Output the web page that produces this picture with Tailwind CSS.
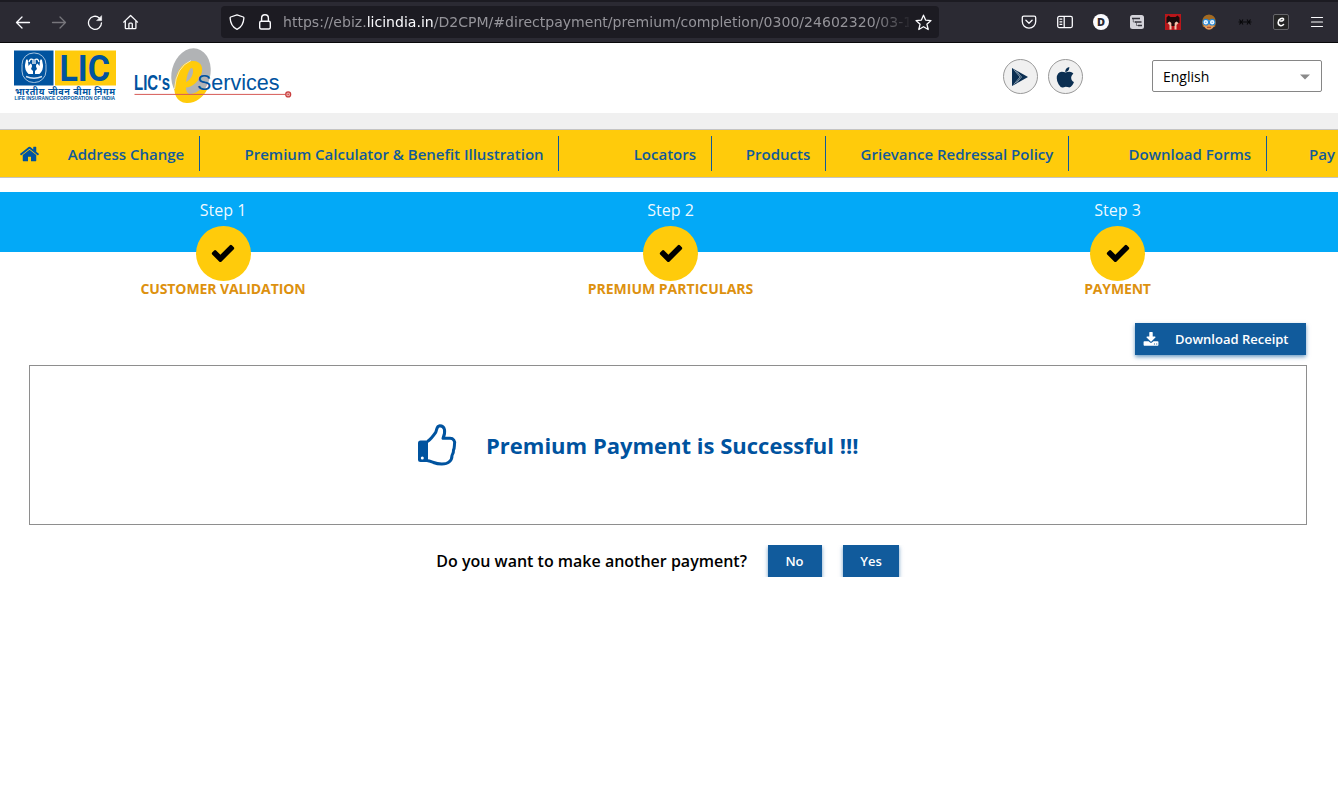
<!DOCTYPE html>
<html lang="en">
<head>
<meta charset="utf-8">
<title>LIC e-Services</title>
<script src="https://cdn.jsdelivr.net/npm/@tailwindcss/browser@4"></script>
</head>
<body class="h-[795px] w-[1338px] overflow-hidden bg-white font-['Open_Sans',sans-serif]">
<svg class="hidden">
  <symbol id="check" viewBox="0 0 1792 1792"><path d="M1671 566q0 40-28 68l-724 724-136 136q-28 28-68 28t-68-28l-136-136-362-362q-28-28-28-68t28-68l136-136q28-28 68-28t68 28l294 295 656-657q28-28 68-28t68 28l136 136q28 28 28 68z"/></symbol>
</svg>

<!-- Browser toolbar -->
<div class="flex h-[43px] items-center border-t-2 border-b border-t-[#1c1b22] border-b-[#08080a] bg-[#2b2a33] text-[#fbfbfe]">
  <div class="flex w-[221px] shrink-0 items-center gap-5 pl-[15px]">
    <svg class="size-4" viewBox="0 0 16 16" fill="none" stroke="currentColor" stroke-width="1.3" stroke-linecap="round" stroke-linejoin="round"><path d="M14.500 8.500H1.500M7 3 1.500 8.500 7 14"/></svg>
    <svg class="size-4 text-[#77767c]" viewBox="0 0 16 16" fill="none" stroke="currentColor" stroke-width="1.300" stroke-linecap="round" stroke-linejoin="round"><path d="M1.500 8.500h13M9 3 14.500 8.500 9 14"/></svg>
    <svg class="size-4" viewBox="0 0 16 16" fill="none" stroke="currentColor" stroke-width="1.300" stroke-linecap="round"><path d="M12.300 3.900A6.500 6.500 0 1 0 14.500 8.800"/><path d="M14.600 2v4.600H10z" fill="currentColor" stroke-width=".6"/></svg>
    <svg class="size-4" viewBox="0 0 16 16" fill="none" stroke="currentColor" stroke-width="1.300" stroke-linecap="round" stroke-linejoin="round"><path d="M.7 8.100 7.600 1.500l6.900 6.600M2.300 6.800V14q0 .7.7.7h9.200q.7 0 .7-.7V6.800M5.900 14.500V10q0-.9.9-.9h1.600q.9 0 .9.900v4.500"/></svg>
  </div>
  <div class="flex h-8 w-[718px] items-center rounded bg-[#1c1b22] pl-2 pr-[7px]">
    <svg class="size-4 shrink-0" viewBox="0 0 16 16" fill="none" stroke="currentColor" stroke-width="1.300" stroke-linejoin="round"><path d="M8 .8 14.300 3c.4.2.6.5.6.900C14.600 9.500 12 13.500 8 15.300 4 13.500 1.400 9.500 1.100 3.900c0-.4.2-.7.6-.9z"/></svg>
    <svg class="ml-3 size-4 shrink-0" viewBox="0 0 16 16" fill="none" stroke="currentColor" stroke-width="1.400"><rect x="2.700" y="7.200" width="10.600" height="7.800" rx="1.500"/><path d="M4.600 7V4.200a3.400 3.400 0 0 1 6.800 0V7"/></svg>
    <div class="ml-[10px] w-[626px] overflow-hidden whitespace-nowrap font-['DejaVu_Sans',sans-serif] text-[14.060px] leading-5 text-[#95949a] [mask-image:linear-gradient(to_right,black_590px,transparent_630px)]">https://ebiz.<span class="text-[#fbfbfe]">licindia.in</span>/D2CPM/#directpayment/premium/completion/0300/24602320/03-10</div>
    <svg class="ml-[6px] size-[17px] shrink-0" viewBox="0 0 17 17" fill="none" stroke="currentColor" stroke-width="1.300" stroke-linejoin="round"><path d="m8.500 1.200 2.100 4.900 5.400.500-4.100 3.600 1.300 5.300-4.700-2.800-4.700 2.800 1.300-5.300L1 6.600l5.400-.5z"/></svg>
  </div>
  <div class="ml-[82px] flex items-center gap-5">
    <svg class="size-4" viewBox="0 0 16 16" fill="none" stroke="currentColor" stroke-width="1.300" stroke-linecap="round" stroke-linejoin="round"><path d="M2.800 2.200h10.400q1.500 0 1.500 1.500V7.500a6.700 6.700 0 0 1-13.400 0V3.700q0-1.500 1.500-1.500zM4.900 6.300 8 9.300l3.100-3"/></svg>
    <svg class="size-4" viewBox="0 0 16 16" fill="none" stroke="currentColor" stroke-width="1.300"><rect x=".7" y="2.400" width="14.600" height="11.200" rx="1.500"/><path d="M7.200 2.400v11.200M2.500 5.200h2.800M2.500 7.800h2.800M2.500 10.400h2.800"/></svg>
    <div class="flex size-4 items-center justify-center rounded-full bg-[#fbfbfe] text-[11px] font-extrabold leading-4 text-[#2b2a33]">D</div>
    <svg class="size-4" viewBox="0 0 16 16"><rect x="1" y="1" width="14" height="14" rx="2.500" fill="#d4d3da"/><path d="M3 4.500h8M6 8h6.500M9 11.500h4" stroke="#33323b" stroke-width="1.400"/><path d="M4.300 5v3H7M7.500 8.500v3H10" fill="none" stroke="#33323b" stroke-width=".6"/></svg>
    <svg class="size-4" viewBox="0 0 16 16"><path fill="#b9161a" d="M0 0h16v16H0z"/><path fill="#1a0b0b" d="m1.500 3.500 2-2 2 1.500h5l2-1.500 2 2V9h-13z"/><path fill="#eec5ae" d="m2.500 9 2-1.500L6.500 9v6.500H4.500V11zM9.500 9l2-1.500 2 1.500-2 2v4.500h-2z"/><path fill="#1a0b0b" d="M6.500 8h3v4h-3z"/></svg>
    <svg class="size-4" viewBox="0 0 16 16"><path fill="#a36a22" d="M1 9Q1 1 8 .5 15 1 15 9l-1 4H2z"/><ellipse cx="8" cy="9.800" rx="5.500" ry="6" fill="#e39a56"/><path fill="#a36a22" d="M2 5.500q6 1 12 0l-2-3.500H4z"/><circle cx="4.800" cy="8.200" r="2.800" fill="#eaf6ff" stroke="#2385d5" stroke-width="1.100"/><circle cx="11.200" cy="8.200" r="2.800" fill="#eaf6ff" stroke="#2385d5" stroke-width="1.100"/><path fill="#2385d5" d="M4.300 7.700h1v1h-1zM10.700 7.700h1v1h-1z"/><path d="M6 13.300h4" stroke="#a13d28"/></svg>
    <svg class="size-4" viewBox="0 0 16 16" stroke="#08080a" stroke-width="1.100"><path d="m2.500 5.500 3.500 5M6 5.500l-3.500 5M1.500 8h13M10 5.500l3.500 5M13.500 5.500l-3.500 5"/></svg>
    <svg class="size-4" viewBox="0 0 16 16" fill="none"><rect x=".5" y=".5" width="15" height="15" rx="1.500" fill="#252525" stroke="#66666a"/><path d="M7.500 7C9 7.300 11 6.300 10.500 5 9.600 3.500 5.300 4.700 5.200 8.500c0 3.500 3.500 4 5.300 2" stroke="#fff" stroke-width="1.600" stroke-linecap="round"/></svg>
    <svg class="size-4" viewBox="0 0 16 16" stroke="currentColor" stroke-width="1.200" stroke-linecap="round"><path d="M2.500 3.500h11M2.500 8h11M2.500 12.500h11"/></svg>
  </div>
</div>

<!-- Site header -->
<header class="flex h-[70px] items-start">
  <svg class="ml-3 mt-1 h-[58px] w-[106px]" viewBox="12 47 106 58">
    <rect x="14" y="50.500" width="39.500" height="35" fill="#00539f"/>
    <rect x="55" y="50.500" width="61" height="35" fill="#ffcb0b"/>
    <rect x="22" y="53" width="24" height="29.500" rx="11.500" fill="none" stroke="#b9d0e6" stroke-width=".9"/>
    <path d="M26 60q1.500-2 2 1l.5 5 2-2.500q2 1 1.500 3L31 69l2 2v3h-4.500q-4-4-3.500-9zM42 60q-1.500-2-2 1l-.5 5-2-2.500q-2 1-1.500 3L37 69l-2 2v3h4.500q4-4 3.500-9z" fill="#fff"/>
    <path d="M29 62q1-4 4-2.500V64M39 62q-1-4-4-2.500V64" fill="none" stroke="#fff" stroke-width="1.300"/>
    <path d="M26 76.500q8 3.500 16 0" fill="none" stroke="#d0e0ef" stroke-width="1.400"/>
    <text x="59.500" y="80.500" font-family="Roboto" font-weight="700" font-size="36.500" textLength="50.500" lengthAdjust="spacingAndGlyphs" fill="#00539f">LIC</text>
    <text x="15" y="94.500" font-family="Noto Sans, Noto Sans Devanagari, sans-serif" font-weight="700" font-size="9" textLength="100" lengthAdjust="spacing" fill="#00539f">भारतीय जीवन बीमा निगम</text>
    <text x="14.500" y="100.300" font-family="Liberation Sans" font-weight="700" font-size="5.200" textLength="100.500" lengthAdjust="spacingAndGlyphs" fill="#00539f">LIFE INSURANCE CORPORATION OF INDIA</text>
  </svg>
  <svg class="ml-3 mt-1 h-[60px] w-[168px]" viewBox="130 47 168 60">
    <ellipse cx="191" cy="73.500" rx="19.300" ry="25.500" transform="rotate(14 191 73.500)" fill="#b1b3b5"/>
    <path d="M186.500 103C176.500 102.500 172.500 93 175 82 177 69 184 61 193 61 202 61 204.500 69 200 77 197 83 192 87 186 87.500 186 92 188 94.500 191 94 195 93.500 199 91 201.500 88.500L207.500 89C203 97.500 195.500 103.500 186.500 103ZM186 82C190 80 193 76 193 71 193 65 188 68 186 82Z" fill="#ffcb0b" fill-rule="evenodd"/>
    <path d="M174.500 89Q176 67 191 60.500" fill="none" stroke="#eee" stroke-width=".8"/>
    <text x="134" y="89.500" font-family="Liberation Sans" font-weight="700" font-size="22" textLength="36" lengthAdjust="spacingAndGlyphs" fill="#00539f">LIC's</text>
    <text x="197" y="90" font-family="Liberation Sans" font-size="22.500" textLength="82.500" lengthAdjust="spacingAndGlyphs" fill="#00539f">Services</text>
    <path d="M134.500 94.400h151" stroke="#d65a55"/>
    <circle cx="288.200" cy="94.400" r="2.500" fill="#e9a9a7" stroke="#c93d3d" stroke-width="1.200"/><circle cx="288.200" cy="94.400" r=".7" fill="#c93d3d"/>
  </svg>
  <div class="ml-[705px] mt-4 flex gap-[10px]">
    <div class="flex size-[35px] items-center justify-center rounded-full border border-[#999] bg-[#f0f0f0]">
      <svg class="mr-px size-[18px]" viewBox="0 0 18 18"><path d="M1 0v18L17 9z" fill="#0b2f52"/><path d="M2.800 1.500 9 9 2.800 16.500M5.500 3.200 10.500 9l-5 5.800" fill="none" stroke="#b8c5d0" stroke-width=".7"/></svg>
    </div>
    <div class="flex size-[35px] items-center justify-center rounded-full border border-[#999] bg-[#f0f0f0]">
      <svg class="mt-0.5 h-[21px] w-[21px]" viewBox="100 0 1600 1700" fill="#0b2f52"><path d="M1585 1215q-39 125-123 250-129 196-257 196-49 0-140-32-86-32-151-32-61 0-142 33-81 34-132 34-152 0-301-259-147-261-147-503 0-228 113-374 113-144 284-144 72 0 177 30 104 30 138 30 45 0 143-34 102-34 173-34 119 0 213 65 52 36 104 100-79 67-114 118-65 94-65 207 0 124 69 223t158 126zm-376-1173q0 61-29 136-30 75-93 138-54 54-108 72-37 11-104 17 3-149 78-257 74-107 250-148 1 3 2.500 11t2.500 11q0 4 .5 10t.5 10z"/></svg>
    </div>
  </div>
  <div class="ml-[69px] mt-[17px] flex h-8 w-[170px] items-center justify-between rounded-[2px] border border-[#868686] pl-[10px] pr-[11px] text-sm text-black">
    <span class="pt-px">English</span>
    <svg class="mt-px h-[6px] w-[10px]" viewBox="0 0 10 6"><path d="M0 .5h10L5 5.500z" fill="#8a8a8a"/></svg>
  </div>
</header>
<div class="h-4 bg-[#f0f0f0]"></div>

<!-- Main navigation -->
<nav class="flex h-[49px] w-full items-center overflow-hidden whitespace-nowrap border-y border-[#c4c4c4] bg-[#ffcb0b] text-[15px] font-semibold text-[#115a9a]">
  <a class="w-[40px] shrink-0 pl-[19px]"><svg class="h-5 w-[21px]" preserveAspectRatio="none" viewBox="0 0 1792 1792" fill="#00539f"><path d="M1472 992v480q0 26-19 45t-45 19h-384v-384h-256v384h-384q-26 0-45-19t-19-45v-480q0-1 .5-3t.5-3l575-474 575 474q1 2 1 6zm223-69l-62 74q-8 9-21 11h-3q-13 0-21-7l-692-577-692 577q-12 8-24 7-13-2-21-11l-62-74q-8-10-7-23.500t11-21.500l719-599q32-26 76-26t76 26l244 204v-195q0-14 9-23t23-9h192q14 0 23 9t9 23v408l219 182q10 8 11 21.500t-7 23.500z"/></svg></a>
  <a class="h-[35px] w-[160px] shrink-0 border-r border-[#115a9a] pr-[14.800px] text-right leading-[36px]">Address Change</a>
  <a class="h-[35px] w-[359px] shrink-0 border-r border-[#115a9a] pr-[14.400px] text-right leading-[36px]">Premium Calculator &amp; Benefit Illustration</a>
  <a class="h-[35px] w-[153px] shrink-0 border-r border-[#115a9a] pr-[15px] text-right leading-[36px]">Locators</a>
  <a class="h-[35px] w-[114px] shrink-0 border-r border-[#115a9a] pr-[14.800px] text-right leading-[36px]">Products</a>
  <a class="h-[35px] w-[243px] shrink-0 border-r border-[#115a9a] pr-[14.700px] text-right leading-[36px]">Grievance Redressal Policy</a>
  <a class="h-[35px] w-[198px] shrink-0 border-r border-[#115a9a] pr-[15px] text-right leading-[36px]">Download Forms</a>
  <a class="h-[35px] shrink-0 pl-[42px] leading-[36px]">Pay Premium</a>
</nav>

<!-- Payment steps -->
<section class="mt-[14px] h-[131px] w-full overflow-hidden bg-[linear-gradient(#03a9f7_60px,#fff_60px)]">
  <div class="grid w-[1341px] grid-cols-3 text-center">
    <div class="flex flex-col items-center pt-[6px]">
      <div class="h-7 pr-px text-base text-white/95">Step 1</div>
      <div class="flex size-[55px] items-center justify-center rounded-full bg-[#ffcb0b] pb-[2px] pr-px"><svg class="size-[26px]"><use href="#check"/></svg></div>
      <div class="-mt-0.5 pr-px text-sm font-bold leading-[19px] tracking-[-0.1px] text-[#dd910f]">CUSTOMER VALIDATION</div>
    </div>
    <div class="flex flex-col items-center pt-[6px]">
      <div class="h-7 text-base text-white/95">Step 2</div>
      <div class="flex size-[55px] items-center justify-center rounded-full bg-[#ffcb0b] pb-[2px]"><svg class="size-[26px]"><use href="#check"/></svg></div>
      <div class="-mt-0.5 text-sm font-bold leading-[19px] text-[#dd910f]">PREMIUM PARTICULARS</div>
    </div>
    <div class="flex flex-col items-center pt-[6px]">
      <div class="h-7 text-base text-white/95">Step 3</div>
      <div class="flex size-[55px] items-center justify-center rounded-full bg-[#ffcb0b] pb-[2px]"><svg class="size-[26px]"><use href="#check"/></svg></div>
      <div class="-mt-0.5 text-sm font-bold leading-[19px] tracking-[-0.15px] text-[#dd910f]">PAYMENT</div>
    </div>
  </div>
</section>

<!-- Result -->
<main>
  <div class="flex justify-end pr-8">
    <button class="flex h-8 w-[171px] items-center bg-[#115b9c] pl-2 pt-px text-[13px] font-semibold text-white shadow-[0_2px_4px_#115b9c99]">
      <svg class="size-4" viewBox="0 0 1792 1792" fill="currentColor"><path d="M1344 1344q0-26-19-45t-45-19-45 19-19 45 19 45 45 19 45-19 19-45zm256 0q0-26-19-45t-45-19-45 19-19 45 19 45 45 19 45-19 19-45zm128-224v320q0 40-28 68t-68 28h-1472q-40 0-68-28t-28-68v-320q0-40 28-68t68-28h465l135 136q58 56 136 56t136-56l136-136h464q40 0 68 28t28 68zm-325-569q17 41-14 70l-448 448q-18 19-45 19t-45-19l-448-448q-31-29-14-70 17-39 59-39h256v-448q0-26 19-45t45-19h256q26 0 45 19t19 45v448h256q42 0 59 39z"/></svg>
      <span class="ml-4">Download Receipt</span>
    </button>
  </div>
  <div class="ml-[29px] mt-[10px] flex h-[160px] w-[1278px] items-center border border-[#8e8e8e] pl-[387px] text-[#00539f]">
    <svg class="mb-px size-[42px]" viewBox="0 0 42 42"><path d="M3.500 16.500H11v21.500H3.500Q1 38 1 35.500V19Q1 16.500 3.500 16.500z" fill="currentColor"/><circle cx="5.300" cy="34" r="1.500" fill="#fff"/><path d="M10.500 17.500C14 15 16.500 11.500 18.700 8.300 20 5.500 19.500 2 22.800 1.800 28 1.800 29 7.500 26 14.300H33C36.500 14.300 38.200 17 37.500 20 37.300 22.500 37.500 24 36.500 26 36.700 28.500 36 30 35 31.500 35 35 33.500 37 32 38 29 40.800 21 40.300 16.500 38.500 14 37.600 12.500 36.800 10.500 36.700" fill="none" stroke="currentColor" stroke-width="3" stroke-linejoin="round"/></svg>
    <h1 class="ml-[27px] text-[22px] font-bold">Premium Payment is Successful !!!</h1>
  </div>
  <div class="mt-5 flex h-8 items-center overflow-x-clip overflow-y-hidden pl-[436.300px]">
    <p class="w-[331.700px] text-base font-semibold text-black">Do you want to make another payment?</p>
    <button class="h-8 w-[54px] bg-[#115b9c] pr-px pt-px text-[13px] font-semibold text-white shadow-[0_2px_4px_#115b9c99]">No</button>
    <button class="ml-[21px] h-8 w-[56px] bg-[#115b9c] pt-px text-[13px] font-semibold text-white shadow-[0_2px_4px_#115b9c99]">Yes</button>
  </div>
</main>
</body>
</html>
